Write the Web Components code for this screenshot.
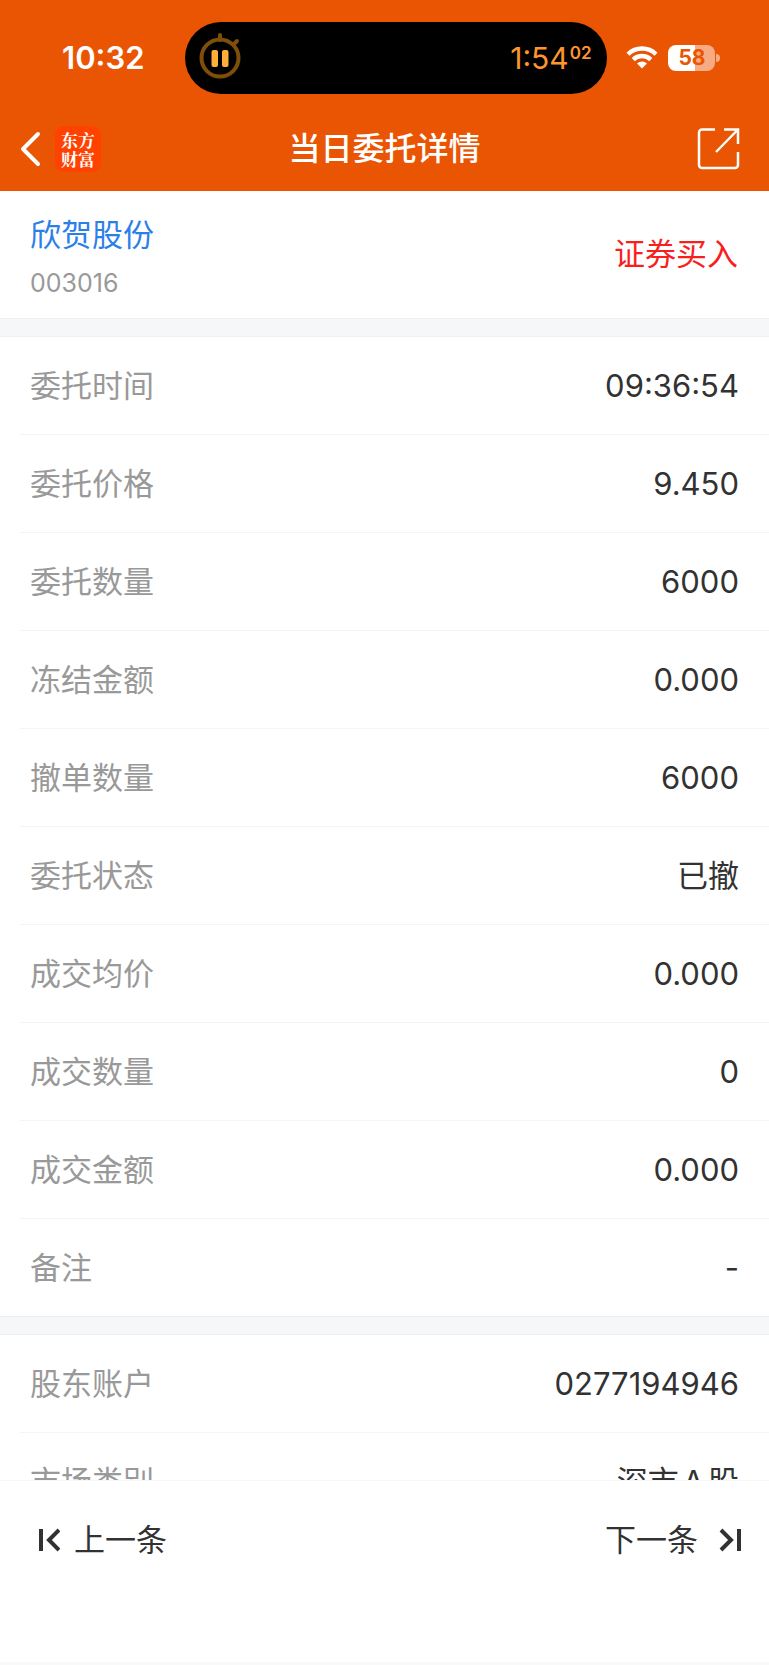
<!DOCTYPE html>
<html lang="zh-CN">
<head>
<meta charset="UTF-8">
<meta name="viewport" content="width=device-width, initial-scale=1">
<title>当日委托详情</title>
<style>
  body {
    margin: 0;
    height: 100vh;
    display: flex;
    flex-direction: column;
    background: #fff;
    color: #323232;
    font-family: Inter, "Noto Sans CJK SC", sans-serif;
    font-size: 31px;
    text-autospace: normal;
  }
  main {
    flex: 1;
    min-height: 0;
    overflow: hidden;
  }
</style>
</head>
<body>
<status-bar>
  <span slot="time">10:32</span>
  <span slot="timer">1:54</span>
  <span slot="hundredths">02</span>
  <span slot="battery">58</span>
</status-bar>
<nav-bar>当日委托详情</nav-bar>
<main>
  <stock-summary>
    <a slot="name" href="#stock">欣贺股份</a>
    <span slot="code">003016</span>
    <span slot="side">证券买入</span>
  </stock-summary>
  <detail-group>
    <detail-row label="委托时间">09:36:54</detail-row>
    <detail-row label="委托价格">9.450</detail-row>
    <detail-row label="委托数量">6000</detail-row>
    <detail-row label="冻结金额">0.000</detail-row>
    <detail-row label="撤单数量">6000</detail-row>
    <detail-row label="委托状态">已撤</detail-row>
    <detail-row label="成交均价">0.000</detail-row>
    <detail-row label="成交数量">0</detail-row>
    <detail-row label="成交金额">0.000</detail-row>
    <detail-row label="备注">-</detail-row>
  </detail-group>
  <detail-group>
    <detail-row label="股东账户">0277194946</detail-row>
    <detail-row label="市场类别">深市A股</detail-row>
  </detail-group>
</main>
<pager-bar></pager-bar>

<script>
// status bar component
const statusBar = document.createElement('template')
statusBar.innerHTML = `
<style>
  * { box-sizing: border-box; }
  :host {
    display: block;
    background: #ea5504;
    color: white;
    padding-top: 22px;
  }
  .bar {
    display: grid;
    grid-template-columns: 24% 55% 21%;
    align-items: center;
  }
  .time {
    padding: 0 0 2px 22px;
    text-align: center;
    font-size: 31px;
    font-weight: 600;
  }
  .island {
    height: 72px;
    border-radius: 36px;
    background: black;
    color: #ff9530;
    display: flex;
    align-items: center;
    justify-content: space-between;
    padding: 0 16px 0 14px;
  }
  .timer {
    display: flex;
    font-size: 30px;
    line-height: 36px;
  }
  .hundredths {
    padding-left: 1px;
    font-size: 17px;
    font-weight: 600;
    line-height: 26px;
  }
  .signals {
    display: flex;
    align-items: center;
    gap: 10px;
    padding-left: 19px;
  }
  .battery {
    display: flex;
    align-items: center;
    gap: 1px;
  }
  .cell {
    width: 47px;
    height: 26px;
    border-radius: 8px;
    background: linear-gradient(to right, #fff 58%, #f6ab82 58%);
    color: #ea5504;
    font-size: 21px;
    font-weight: 700;
    line-height: 26px;
    text-align: center;
  }
  svg { display: block; }
</style>
<div class="bar">
  <div class="time"><slot name="time"></slot></div>
  <div class="island">
    <svg width="44" height="56" viewBox="0 0 44 56" fill="none" stroke="#7f4e08" stroke-width="4" stroke-linecap="round">
      <circle cx="21" cy="28" r="18.5"/>
      <path d="M21 5v5M35 14l3-3"/>
      <g fill="#ffb038" stroke="none">
        <rect x="12.5" y="20" width="6.5" height="17" rx="2"/>
        <rect x="23" y="20" width="6.5" height="17" rx="2"/>
      </g>
    </svg>
    <div class="timer">
      <slot name="timer"></slot>
      <div class="hundredths"><slot name="hundredths"></slot></div>
    </div>
  </div>
  <div class="signals">
    <svg width="32" height="26" viewBox="0 0 32 26" fill="none" stroke="white" stroke-width="4.4">
      <path d="M2 9.2a20 20 0 0 1 28 0"/>
      <path d="M7.2 14.6a12.6 12.6 0 0 1 17.6 0"/>
      <path d="M16 23.6l-5-5a7.2 7.2 0 0 1 10 0z" fill="white" stroke="none"/>
    </svg>
    <div class="battery">
      <div class="cell"><slot name="battery"></slot></div>
      <svg width="4" height="8" viewBox="0 0 4 8"><path d="M0 0a4 4 0 0 1 0 8z" fill="#f6ab82"/></svg>
    </div>
  </div>
</div>
`
class StatusBar extends HTMLElement{
    constructor(){
        super()
        this.attachShadow({mode:'open'})
        this.shadowRoot.appendChild(statusBar.content.cloneNode(true))
    }
}
window.customElements.define('status-bar', StatusBar)

// title bar component
const navBar = document.createElement('template')
navBar.innerHTML = `
<style>
  * { box-sizing: border-box; }
  :host {
    display: block;
    background: #ea5504;
    color: white;
  }
  header {
    height: 97px;
    padding: 12px 28px 0 20px;
    display: grid;
    grid-template-columns: 1fr auto 1fr;
    align-items: center;
  }
  h1 {
    margin: 0;
    padding-left: 8px;
    font-size: 32px;
    font-weight: 500;
    line-height: 48px;
  }
  button {
    border: 0;
    padding: 0;
    background: none;
    color: inherit;
    font: inherit;
    cursor: pointer;
    display: flex;
    align-items: center;
  }
  .back { gap: 14px; }
  .share { justify-self: end; }
  .logo {
    width: 46px;
    height: 46px;
    padding: 4px 6px 0;
    border-radius: 9px;
    background: #ff4200;
    font-family: "Noto Serif CJK SC", "Noto Sans CJK SC", serif;
    font-size: 17px;
    font-weight: 700;
    line-height: 19px;
  }
</style>
<header>
  <button class="back" type="button" aria-label="返回">
    <svg width="21" height="36" viewBox="0 0 21 36" fill="none" stroke="white" stroke-width="4" stroke-linecap="round" stroke-linejoin="round"><path d="M18 3L3 18l15 15"/></svg>
    <div class="logo">东方财富</div>
  </button>
  <h1><slot></slot></h1>
  <button class="share" type="button" aria-label="分享">
    <svg width="44" height="44" viewBox="0 0 44 44" fill="none" stroke="white" stroke-width="2.5">
      <path d="M18 2.5H5a3 3 0 0 0-3 3V38a3 3 0 0 0 3 3h33a3 3 0 0 0 3-3V25"/>
      <path d="M27 2.5h14V17M40 3.5L19 25"/>
    </svg>
  </button>
</header>
`
class NavBar extends HTMLElement{
    constructor(){
        super()
        this.attachShadow({mode:'open'})
        this.shadowRoot.appendChild(navBar.content.cloneNode(true))
    }
}
window.customElements.define('nav-bar', NavBar)

// stock name, code and direction
const stockSummary = document.createElement('template')
stockSummary.innerHTML = `
<style>
  :host {
    display: flex;
    align-items: center;
    justify-content: space-between;
    padding: 20px 31px 19px 30px;
  }
  .stock {
    display: flex;
    flex-direction: column;
    gap: 8px;
    line-height: 48px;
  }
  .code {
    color: #999;
    font-size: 25px;
    line-height: 32px;
  }
  .side {
    padding-bottom: 8px;
    color: #f81f1f;
  }
  ::slotted(a) {
    color: #2b80e8;
    text-decoration: none;
  }
</style>
<div class="stock">
  <slot name="name"></slot>
  <div class="code"><slot name="code"></slot></div>
</div>
<div class="side"><slot name="side"></slot></div>
`
class StockSummary extends HTMLElement{
    constructor(){
        super()
        this.attachShadow({mode:'open'})
        this.shadowRoot.appendChild(stockSummary.content.cloneNode(true))
    }
}
window.customElements.define('stock-summary', StockSummary)

// group of rows, with the grey band above it
const detailGroup = document.createElement('template')
detailGroup.innerHTML = `
<style>
  :host { display: block; }
  .band {
    height: 17px;
    background: #f6f7f9;
    border-top: 1px solid #eeeff1;
    border-bottom: 1px solid #eeeff1;
  }
</style>
<div class="band"></div>
<slot></slot>
`
class DetailGroup extends HTMLElement{
    constructor(){
        super()
        this.attachShadow({mode:'open'})
        this.shadowRoot.appendChild(detailGroup.content.cloneNode(true))
    }
}
window.customElements.define('detail-group', DetailGroup)

// label and value
const detailRow = document.createElement('template')
detailRow.innerHTML = `
<style>
  :host {
    display: block;
    margin-left: 20px;
    border-bottom: 1px solid #f4f4f5;
  }
  :host(:last-child) { border: 0; }
  dl {
    margin: 0;
    padding: 25px 30px 24px 10px;
    display: flex;
    justify-content: space-between;
    line-height: 48px;
  }
  dt { color: #999; }
  dd { margin: 0; }
</style>
<dl>
  <dt></dt>
  <dd><slot></slot></dd>
</dl>
`
class DetailRow extends HTMLElement{
    constructor(){
        super()
        this.attachShadow({mode:'open'})
        this.shadowRoot.appendChild(detailRow.content.cloneNode(true))
    }
    connectedCallback(){
        this.shadowRoot.querySelector('dt').textContent = this.getAttribute('label')
    }
}
window.customElements.define('detail-row', DetailRow)

// previous / next order
const pagerBar = document.createElement('template')
pagerBar.innerHTML = `
<style>
  :host {
    display: block;
    background: #fff;
    border-top: 1px solid #f7f7f7;
    border-bottom: 3px solid #f9f9f9;
  }
  nav {
    display: flex;
    justify-content: space-between;
    padding: 35px 27px 98px 37px;
  }
  button {
    border: 0;
    padding: 0;
    background: none;
    color: inherit;
    font: inherit;
    line-height: 48px;
    cursor: pointer;
    display: flex;
    align-items: center;
  }
  .prev { gap: 14px; }
  .next { gap: 21px; }
  svg {
    fill: none;
    stroke: #323232;
    stroke-width: 4;
  }
</style>
<nav>
  <button class="prev" type="button">
    <svg width="23" height="24" viewBox="0 0 23 24"><path d="M4 1v22M22 2L12 12l10 10"/></svg>
    上一条
  </button>
  <button class="next" type="button">
    下一条
    <svg width="23" height="24" viewBox="0 0 23 24"><path d="M20 1v22M2 2l10 10L2 22"/></svg>
  </button>
</nav>
`
class PagerBar extends HTMLElement{
    constructor(){
        super()
        this.attachShadow({mode:'open'})
        this.shadowRoot.appendChild(pagerBar.content.cloneNode(true))
    }
}
window.customElements.define('pager-bar', PagerBar)
</script>
</body>
</html>
